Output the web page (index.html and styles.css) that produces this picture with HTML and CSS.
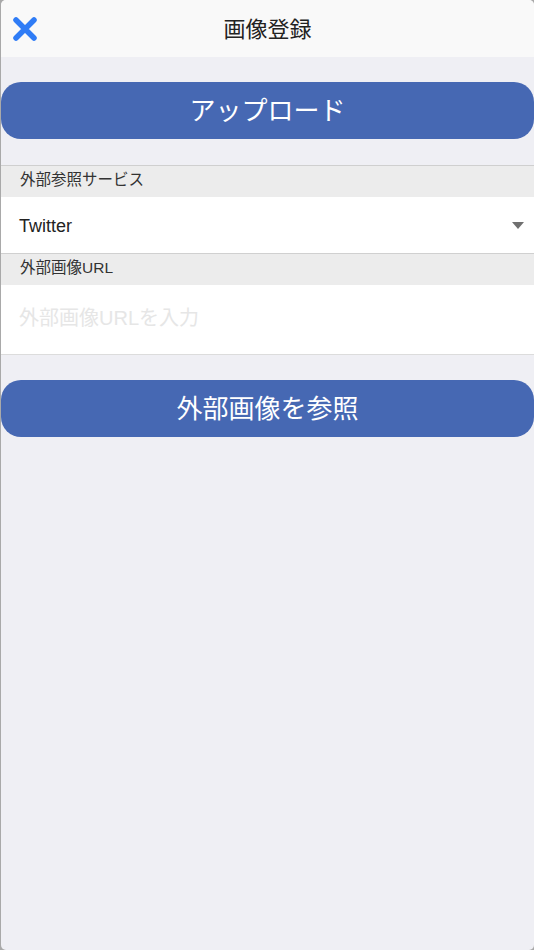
FILE: index.html
```html
<!DOCTYPE html>
<html lang="ja">
<head>
<meta charset="utf-8">
<title>画像登録</title>
<link rel="stylesheet" href="styles.css">
</head>
<body>
<div class="app">
  <header class="nav">
    <button class="close" aria-label="閉じる">
      <svg width="26" height="26" viewBox="0 0 26 26"><path d="M4 4 L22 22 M22 4 L4 22" stroke="#2f7cf6" stroke-width="5.5" stroke-linecap="round" fill="none"/></svg>
    </button>
    <h1 class="title">画像登録</h1>
  </header>
  <main class="content">
    <button class="btn btn-upload"><span class="btn-text">アップロード</span></button>
    <section class="form">
      <div class="label"><span class="label-text">外部参照サービス</span></div>
      <div class="row select-row">
        <span class="value">Twitter</span>
        <span class="caret"></span>
      </div>
      <div class="label"><span class="label-text">外部画像URL</span></div>
      <div class="row input-row">
        <span class="placeholder">外部画像URLを入力</span>
      </div>
    </section>
    <button class="btn btn-ref"><span class="btn-text">外部画像を参照</span></button>
  </main>
</div>
</body>
</html>
```
FILE: styles.css
```css
html, body {
  margin: 0;
  padding: 0;
  background: #a9a9a9;
}
body {
  font-family: "Liberation Sans", "Noto Sans CJK JP", sans-serif;
  width: 534px;
  height: 950px;
  overflow: hidden;
}
.app {
  margin-left: 1px;
  width: 533px;
  height: 950px;
  background: #efeff4;
  border-radius: 5px;
  overflow: hidden;
  display: flex;
  flex-direction: column;
}
.nav {
  height: 57px;
  background: #f9f9f9;
  display: flex;
  align-items: center;
  justify-content: center;
  position: relative;
}
.close {
  position: absolute;
  left: 11px;
  top: 16px;
  border: 0;
  background: none;
  padding: 0;
  width: 26px;
  height: 26px;
  display: block;
}
.close svg { display: block; }
.title {
  margin: 0 0 3px 0;
  font-family: "Noto Sans CJK JP", sans-serif;
  font-weight: 400;
  font-size: 22px;
  color: #222;
  line-height: 1;
}
.content {
  display: flex;
  flex-direction: column;
  padding-top: 25px;
}
.btn {
  border: 0;
  width: 100%;
  height: 57px;
  border-radius: 20px;
  background: #4668b3;
  color: #fff;
  font-family: "Noto Sans CJK JP", sans-serif;
  font-size: 26px;
  font-weight: 400;
  padding: 0;
  display: flex;
  align-items: center;
  justify-content: center;
}
.btn-text {
  line-height: 1;
  margin-bottom: 4px;
}
.form {
  margin-top: 26px;
  border-top: 1px solid #cfcfcf;
  border-bottom: 1px solid #dcdcdc;
}
.label {
  height: 31px;
  background: #ececec;
  padding-left: 19px;
  display: flex;
  align-items: center;
  font-family: "Liberation Sans", "Noto Sans CJK JP", sans-serif;
  font-size: 15.5px;
  color: #333;
}
.label-text {
  line-height: 1;
  margin-bottom: 3px;
}
.row {
  background: #fff;
  display: flex;
  align-items: center;
  padding: 0 10px 0 18px;
}
.select-row {
  height: 56px;
  border-bottom: 1px solid #d0d0d0;
  justify-content: space-between;
}
.value {
  font-size: 18px;
  color: #222;
  line-height: 1;
  margin-top: 1px;
}
.caret {
  width: 0;
  height: 0;
  border-left: 6.5px solid transparent;
  border-right: 6.5px solid transparent;
  border-top: 7px solid #707070;
}
.input-row {
  height: 69px;
}
.placeholder {
  font-size: 20px;
  color: #e6e6e6;
  line-height: 1;
  margin-bottom: 3px;
}
.btn-ref {
  margin-top: 25px;
}
```
